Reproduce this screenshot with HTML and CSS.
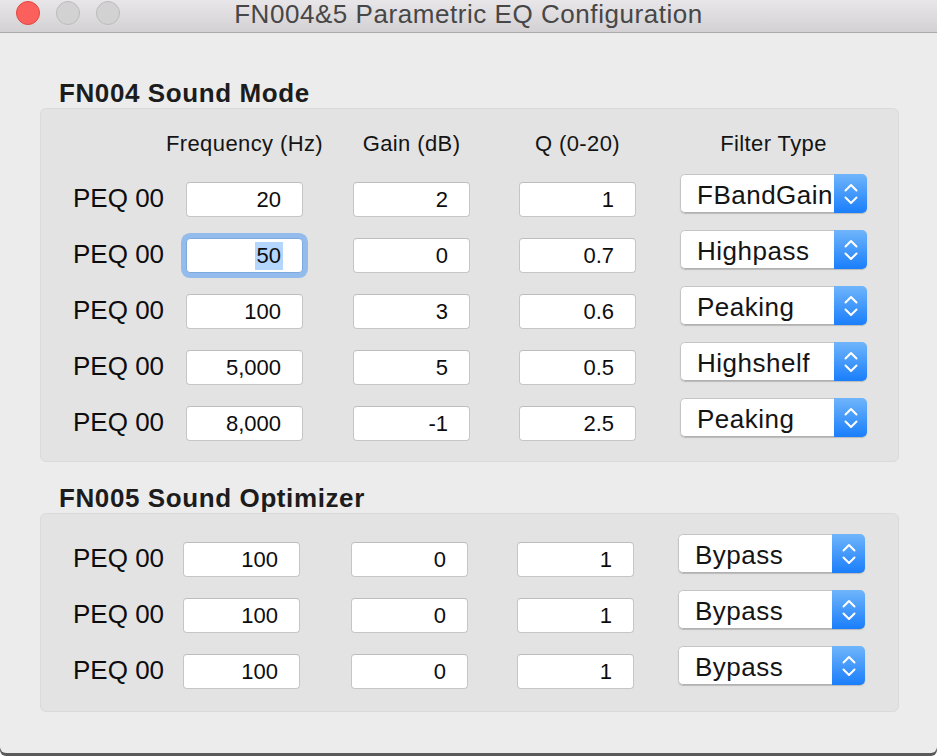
FILE: index.html
```html
<!DOCTYPE html>
<html>
<head>
<meta charset="utf-8">
<title>FN004&amp;5 Parametric EQ Configuration</title>
<link rel="stylesheet" href="styles.css">
</head>
<body>
<div class="window">
  <div class="titlebar">
    <div class="lights">
      <span class="light red"></span>
      <span class="light"></span>
      <span class="light"></span>
    </div>
    <div class="title">FN004&amp;5 Parametric EQ Configuration</div>
    <div></div>
  </div>
  <div class="content">
    <h2 class="heading">FN004 Sound Mode</h2>
    <div class="group g1">
      <div class="row head">
        <span></span>
        <div class="hcell">Frequency (Hz)</div>
        <div class="hcell">Gain (dB)</div>
        <div class="hcell">Q (0-20)</div>
        <div class="hcell wide">Filter Type</div>
      </div>
      <div class="row">
        <span class="label">PEQ 00</span>
        <div class="field">20</div>
        <div class="field">2</div>
        <div class="field">1</div>
        <div class="select"><span class="select-text">FBandGain</span><span class="select-btn"><svg width="14" height="22" viewBox="0 0 14 22"><polyline points="1.5,7.5 7,2 12.5,7.5"/><polyline points="1.5,14.5 7,20 12.5,14.5"/></svg></span></div>
      </div>
      <div class="row">
        <span class="label">PEQ 00</span>
        <div class="field focus"><span class="sel">50</span></div>
        <div class="field">0</div>
        <div class="field">0.7</div>
        <div class="select"><span class="select-text">Highpass</span><span class="select-btn"><svg width="14" height="22" viewBox="0 0 14 22"><polyline points="1.5,7.5 7,2 12.5,7.5"/><polyline points="1.5,14.5 7,20 12.5,14.5"/></svg></span></div>
      </div>
      <div class="row">
        <span class="label">PEQ 00</span>
        <div class="field">100</div>
        <div class="field">3</div>
        <div class="field">0.6</div>
        <div class="select"><span class="select-text">Peaking</span><span class="select-btn"><svg width="14" height="22" viewBox="0 0 14 22"><polyline points="1.5,7.5 7,2 12.5,7.5"/><polyline points="1.5,14.5 7,20 12.5,14.5"/></svg></span></div>
      </div>
      <div class="row">
        <span class="label">PEQ 00</span>
        <div class="field">5,000</div>
        <div class="field">5</div>
        <div class="field">0.5</div>
        <div class="select"><span class="select-text">Highshelf</span><span class="select-btn"><svg width="14" height="22" viewBox="0 0 14 22"><polyline points="1.5,7.5 7,2 12.5,7.5"/><polyline points="1.5,14.5 7,20 12.5,14.5"/></svg></span></div>
      </div>
      <div class="row">
        <span class="label">PEQ 00</span>
        <div class="field">8,000</div>
        <div class="field">-1</div>
        <div class="field">2.5</div>
        <div class="select"><span class="select-text">Peaking</span><span class="select-btn"><svg width="14" height="22" viewBox="0 0 14 22"><polyline points="1.5,7.5 7,2 12.5,7.5"/><polyline points="1.5,14.5 7,20 12.5,14.5"/></svg></span></div>
      </div>
    </div>

    <h2 class="heading h2">FN005 Sound Optimizer</h2>
    <div class="group g2">
      <div class="row">
        <span class="label">PEQ 00</span>
        <div class="field">100</div>
        <div class="field">0</div>
        <div class="field">1</div>
        <div class="select"><span class="select-text">Bypass</span><span class="select-btn"><svg width="14" height="22" viewBox="0 0 14 22"><polyline points="1.5,7.5 7,2 12.5,7.5"/><polyline points="1.5,14.5 7,20 12.5,14.5"/></svg></span></div>
      </div>
      <div class="row">
        <span class="label">PEQ 00</span>
        <div class="field">100</div>
        <div class="field">0</div>
        <div class="field">1</div>
        <div class="select"><span class="select-text">Bypass</span><span class="select-btn"><svg width="14" height="22" viewBox="0 0 14 22"><polyline points="1.5,7.5 7,2 12.5,7.5"/><polyline points="1.5,14.5 7,20 12.5,14.5"/></svg></span></div>
      </div>
      <div class="row">
        <span class="label">PEQ 00</span>
        <div class="field">100</div>
        <div class="field">0</div>
        <div class="field">1</div>
        <div class="select"><span class="select-text">Bypass</span><span class="select-btn"><svg width="14" height="22" viewBox="0 0 14 22"><polyline points="1.5,7.5 7,2 12.5,7.5"/><polyline points="1.5,14.5 7,20 12.5,14.5"/></svg></span></div>
      </div>
    </div>
  </div>
</div>
</body>
</html>
```

FILE: styles.css
```css
html, body {
  margin: 0;
  padding: 0;
}
body {
  background: #ffffff;
  font-family: "Liberation Sans", Arial, Helvetica, sans-serif;
  color: #141414;
  width: 940px;
  height: 756px;
  overflow: hidden;
}
.window {
  width: 937px;
  height: 753px;
  background: #ececec;
  border-radius: 0 0 6px 6px;
  box-shadow: 0 3px 0 #5a5a5a;
}
.titlebar {
  height: 32px;
  border-bottom: 1px solid #ababab;
  background: linear-gradient(#e8e6e8, #d3d1d3);
  display: grid;
  grid-template-columns: 1fr auto 1fr;
  align-items: start;
}
.lights {
  display: flex;
  gap: 16px;
  padding: 1px 0 0 16px;
}
.light {
  width: 22px;
  height: 22px;
  border-radius: 50%;
  background: #d2d2d2;
  border: 1px solid #bcbcbc;
}
.light.red {
  background: #fc605c;
  border-color: #df463f;
}
.title {
  font-size: 26px;
  line-height: 29px;
  margin-top: 0;
  letter-spacing: 0.55px;
  color: #474747;
  white-space: nowrap;
}
.content {
  padding: 46px 0 0 40px;
}
.heading {
  margin: 0 0 0 19px;
  font-size: 26px;
  line-height: 29px;
  font-weight: bold;
  letter-spacing: 0.6px;
  color: #1c1c1c;
}
.heading.h2 {
  margin-top: 22px;
}
.group {
  width: 859px;
  box-sizing: border-box;
  background: #e3e3e3;
  border: 1px solid #dadada;
  border-radius: 6px;
}
.g1 {
  padding: 23px 0 11px 32px;
}
.g2 {
  padding: 16px 0 13px 32px;
}
.row {
  display: grid;
  grid-template-columns: 113px 167px 166px 161px 187px;
  height: 56px;
  align-items: start;
}
.g2 .row {
  grid-template-columns: 110px 168px 166px 161px 187px;
}
.row.head {
  height: 24px;
  margin-bottom: 14px;
}
.hcell {
  width: 117px;
  display: flex;
  justify-content: center;
  white-space: nowrap;
  font-size: 22px;
  line-height: 24px;
  letter-spacing: 0.4px;
  color: #141414;
}
.hcell.wide {
  width: 187px;
}
.label {
  margin-top: 13px;
  font-size: 26px;
  line-height: 30px;
  color: #0d0d0d;
  white-space: nowrap;
}
.field {
  margin-top: 12px;
  width: 117px;
  height: 35px;
  box-sizing: border-box;
  background: #fff;
  border: 1px solid #c6c6c6;
  border-top-color: #bdbdbd;
  border-radius: 4px;
  text-align: right;
  padding-right: 21px;
  font-size: 22px;
  line-height: 33px;
  color: #0d0d0d;
}
.field.focus {
  border-color: #7ea9df;
  box-shadow: 0 0 0 5px #93bcec;
}
.sel {
  display: inline-block;
  line-height: 28px;
  padding: 0 2px;
  margin-right: -2px;
  background: #b4d5fe;
}
.select {
  margin-top: 4px;
  width: 187px;
  height: 39px;
  box-sizing: border-box;
  display: flex;
  border-radius: 5px;
  overflow: hidden;
  box-shadow: 0 1px 1px rgba(0, 0, 0, 0.18);
}
.select-text {
  flex: 1;
  min-width: 0;
  overflow: hidden;
  white-space: nowrap;
  background: #fff;
  border: 1px solid #c4c4c4;
  border-right: none;
  border-bottom-color: #b0b0b0;
  border-radius: 5px 0 0 5px;
  padding: 3px 0 0 16px;
  font-size: 26px;
  line-height: 34px;
  letter-spacing: 0.5px;
  color: #141414;
}
.select-btn {
  width: 33px;
  flex: none;
  display: flex;
  align-items: center;
  justify-content: center;
  background: linear-gradient(#6fb5fb, #1a7efb);
}
.select-btn svg {
  display: block;
}
.select-btn polyline {
  fill: none;
  stroke: #ffffff;
  stroke-width: 2;
  stroke-linecap: round;
  stroke-linejoin: round;
}
```
